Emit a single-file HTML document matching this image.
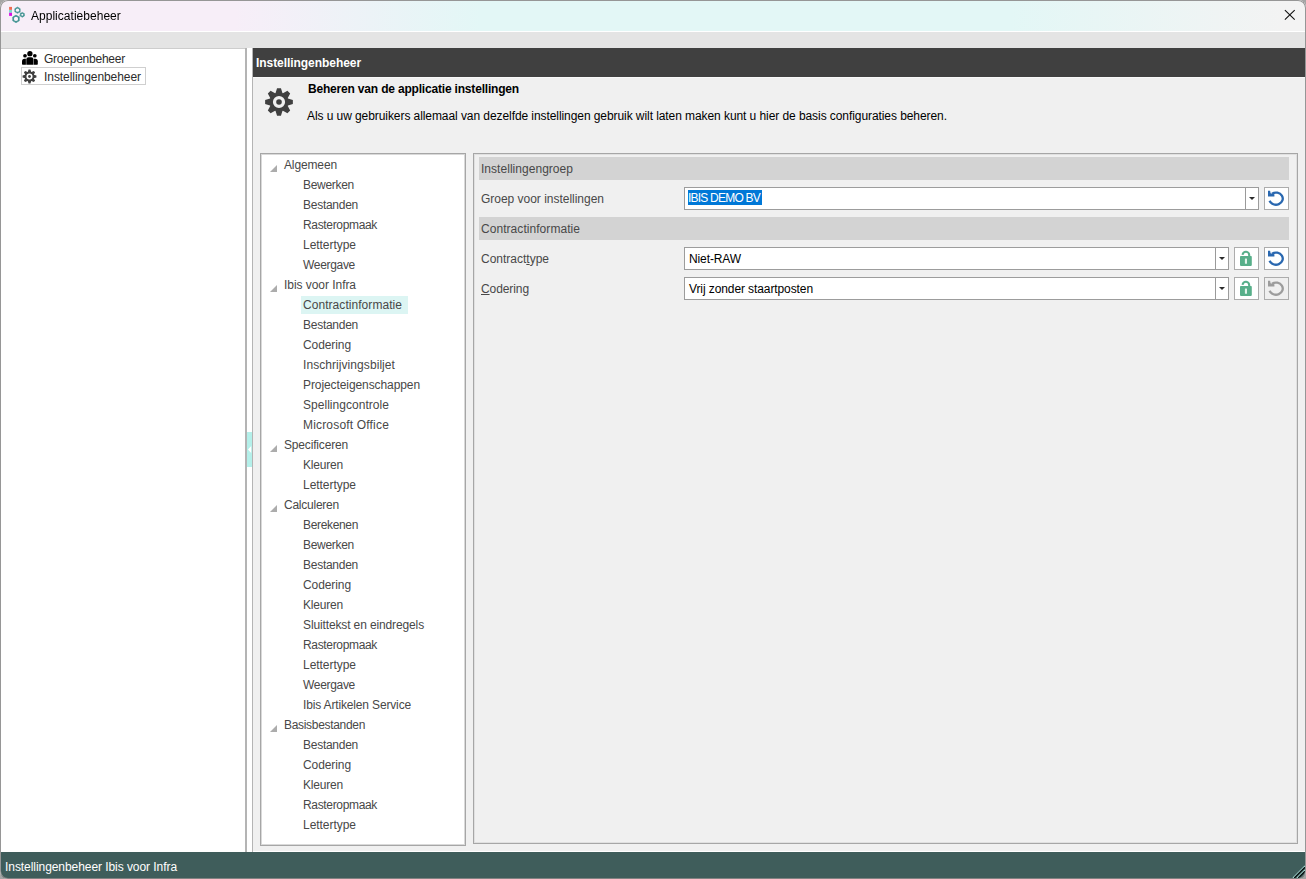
<!DOCTYPE html>
<html lang="nl">
<head>
<meta charset="utf-8">
<title>Applicatiebeheer</title>
<style>
html,body{margin:0;padding:0;}
body{width:1306px;height:879px;overflow:hidden;background:#a5a5a5;font-family:"Liberation Sans",sans-serif;font-size:12px;line-height:14px;color:#1e1e1e;position:relative;}
div,span.tx,svg{position:absolute;box-sizing:border-box;}
.tx{white-space:nowrap;}
#win{left:0;top:0;width:1306px;height:879px;background:#f0f0f0;border-radius:8px;overflow:hidden;}
#frame{left:0;top:0;width:1306px;height:879px;border:1px solid #969696;border-bottom-color:#828282;border-radius:8px;}
#titlebar{left:0;top:0;width:1306px;height:31px;background:linear-gradient(90deg,#f7eef8 0px,#f7eef8 235px,#e3f7f6 480px,#e3f7f6 1010px,#f3f3f3 1285px,#f3f3f3 1306px);}
#tbline{left:0;top:31px;width:1306px;height:1px;background:#fff;}
#band{left:0;top:32px;width:1306px;height:16px;background:#e4e4e4;}
#bandline{left:1px;top:48px;width:245px;height:1px;background:#cdcdcd;}
#left{left:1px;top:49px;width:245px;height:803px;background:#fff;}
#sp1{left:245px;top:48px;width:2px;height:804px;background:#b4b4b4;}
#sp{left:247px;top:48px;width:5px;height:804px;background:#fff;}
#sp2{left:252px;top:48px;width:1px;height:804px;background:#b4b4b4;}
#sph{left:247px;top:432px;width:5px;height:35px;background:#b4f0ea;}
#hdr{left:253px;top:48px;width:1052px;height:29px;background:#404040;}
#hdrline{left:253px;top:77px;width:1052px;height:1px;background:#f8f8f8;}
#wline{left:253px;top:851px;width:1052px;height:1px;background:#fff;}
#status{left:1px;top:852px;width:1304px;height:26px;background:#3f5d5b;}
.nav{color:#2c2c2c;}
#navsel{left:21px;top:67px;width:125px;height:18px;border:1px solid #cfcfcf;}
#treebox{left:260px;top:153px;width:206px;height:693px;background:#fff;border:1px solid #a6a6a6;box-shadow:inset 0 0 0 1px #d9d9d9;}
#setbox{left:473px;top:153px;width:825px;height:691px;border:1px solid #a6a6a6;box-shadow:inset 0 0 0 1px #e0e0e0;}
.tn{color:#484848;}
.tri{left:270px;width:0;height:0;border-left:7px solid transparent;border-bottom:7px solid #acacac;}
.tsel{left:301px;width:107px;height:18px;background:#dcf5f3;}
.sec{left:479px;width:810px;height:23px;background:#d3d3d3;}
.sec .tx{left:2px;top:5px;color:#484848;}
.lbl{color:#484848;}
.combo{height:23px;background:#fff;border:1px solid #9c9c9c;}
.combo .dd{right:0;top:0;width:13px;height:21px;border-left:1px solid #9a9a9a;}
.combo .arr{right:3px;top:9px;width:0;height:0;border-left:3px solid transparent;border-right:3px solid transparent;border-top:3px solid #2a2a2a;}
.combo .val{color:#000;}
.btn{width:25px;height:23px;background:#fff;border:1px solid #acacac;}
.btn.dis{background:#efefef;}
u{text-decoration:underline;text-underline-offset:1px;}
</style>
</head>
<body>
<div id="win">
  <div id="titlebar">
    <svg style="left:0;top:0" width="40" height="31" viewBox="0 0 40 31">
      <rect x="9.1" y="6.9" width="2.9" height="3" fill="#ee6a50"/><rect x="9.1" y="9.9" width="2.9" height="2.9" fill="#7fd8cc"/><rect x="9.1" y="12.8" width="2.9" height="3.1" fill="#d810e2"/>
      <path d="M19.5 12.200 L21 13.500 M19 16.200 L20.600 15.600" stroke="#6fb0ae" stroke-width="0.8" fill="none"/>
      <g fill="#429492" stroke="#429492" stroke-width="0.6" stroke-linejoin="round">
      <polygon points="17.50,7.10 20.18,8.65 20.18,11.75 17.50,13.30 14.82,11.75 14.82,8.65"/>
      <polygon points="22.30,12.40 24.38,13.60 24.38,16.00 22.30,17.20 20.22,16.00 20.22,13.60"/>
      <polygon points="16.00,15.10 19.29,17.00 19.29,20.80 16.00,22.70 12.71,20.80 12.71,17.00"/>
      </g>
      <g fill="#fbf4fb"><circle cx="17.5" cy="10.2" r="1.65"/><circle cx="22.3" cy="14.8" r="1"/><circle cx="16" cy="18.9" r="2.1"/></g>
    </svg>
    <span id="t35" class="tx " style="left:30.5px;top:9px;color:#000;will-change:transform;letter-spacing:0.025px">Applicatiebeheer</span>
    <svg style="left:1284px;top:9px" width="12" height="12" viewBox="0 0 12 12"><path d="M0.900 1.100 L10.700 10.700 M10.700 1.100 L0.900 10.700" stroke="#111" stroke-width="1.1" fill="none"/></svg>
  </div>
  <div id="tbline"></div>
  <div id="band"></div>
  <div id="left"></div>
  <div id="bandline"></div>
  <div id="sp1"></div><div id="sp"></div><div id="sp2"></div>
  <div id="sph"><svg style="left:0;top:13px" width="5" height="9" viewBox="0 0 5 9"><path d="M4.2 1 L1 4.500 L4.2 8 Z" fill="#fff"/></svg></div>

  <!-- left navigation -->
  <svg style="left:22px;top:51px" width="17" height="15" viewBox="0 0 17 15">
    <g fill="#000"><circle cx="7.9" cy="2.65" r="2.65"/><circle cx="3" cy="4.750" r="1.85"/><circle cx="12.800" cy="4.750" r="1.85"/>
    <path d="M4.300 13.750 V8.500 Q4.300 6.300 6.500 6.300 H9.300 Q11.500 6.300 11.500 8.500 V13.750 Z"/>
    <path d="M0 13 V10.250 Q0 7.750 2.500 7.750 H3.900 V13.750 H0.750 Q0 13.750 0 13 Z"/>
    <path d="M15.800 13 V10.250 Q15.800 7.750 13.300 7.750 H11.900 V13.750 H15.050 Q15.800 13.750 15.800 13 Z"/></g>
  </svg>
  <span id="t36" class="tx nav" style="left:44px;top:52px;letter-spacing:-0.237px">Groepenbeheer</span>
  <div id="navsel"></div>
  <svg style="left:22.4px;top:68.6px" width="15" height="15" viewBox="-15 -15 30 30"><path fill="#404040" fill-rule="evenodd" d="M-3.44 -8.96L-1.95 -13.86L1.95 -13.86L3.44 -8.96A9.6 9.6 0 0 1 3.90 -8.77L8.43 -11.18L11.18 -8.43L8.77 -3.90A9.6 9.6 0 0 1 8.96 -3.44L13.86 -1.95L13.86 1.95L8.96 3.44A9.6 9.6 0 0 1 8.77 3.90L11.18 8.43L8.43 11.18L3.90 8.77A9.6 9.6 0 0 1 3.44 8.96L1.95 13.86L-1.95 13.86L-3.44 8.96A9.6 9.6 0 0 1 -3.90 8.77L-8.43 11.18L-11.18 8.43L-8.77 3.90A9.6 9.6 0 0 1 -8.96 3.44L-13.86 1.95L-13.86 -1.95L-8.96 -3.44A9.6 9.6 0 0 1 -8.77 -3.90L-11.18 -8.43L-8.43 -11.18L-3.90 -8.77A9.6 9.6 0 0 1 -3.44 -8.96ZM0 -6.1A6.1 6.1 0 1 0 0 6.1A6.1 6.1 0 1 0 0 -6.1Z"/><circle cx="0" cy="0" r="2.8" fill="#404040"/></svg>
  <span id="t37" class="tx nav" style="left:44px;top:70px;letter-spacing:-0.060px">Instellingenbeheer</span>

  <!-- right panel -->
  <div id="hdr"></div>
  <span id="t38" class="tx " style="left:256px;top:56px;color:#fff;font-weight:bold;letter-spacing:-0.057px">Instellingenbeheer</span>
  <div id="hdrline"></div>
  <svg style="left:264px;top:87px" width="30" height="30" viewBox="-15 -15 30 30"><path fill="#404040" fill-rule="evenodd" d="M-3.44 -8.96L-1.95 -13.86L1.95 -13.86L3.44 -8.96A9.6 9.6 0 0 1 3.90 -8.77L8.43 -11.18L11.18 -8.43L8.77 -3.90A9.6 9.6 0 0 1 8.96 -3.44L13.86 -1.95L13.86 1.95L8.96 3.44A9.6 9.6 0 0 1 8.77 3.90L11.18 8.43L8.43 11.18L3.90 8.77A9.6 9.6 0 0 1 3.44 8.96L1.95 13.86L-1.95 13.86L-3.44 8.96A9.6 9.6 0 0 1 -3.90 8.77L-8.43 11.18L-11.18 8.43L-8.77 3.90A9.6 9.6 0 0 1 -8.96 3.44L-13.86 1.95L-13.86 -1.95L-8.96 -3.44A9.6 9.6 0 0 1 -8.77 -3.90L-11.18 -8.43L-8.43 -11.18L-3.90 -8.77A9.6 9.6 0 0 1 -3.44 -8.96ZM0 -6.1A6.1 6.1 0 1 0 0 6.1A6.1 6.1 0 1 0 0 -6.1Z"/><circle cx="0" cy="0" r="2.8" fill="#404040"/></svg>
  <span id="t39" class="tx " style="left:308px;top:82px;font-weight:bold;color:#000;letter-spacing:-0.186px">Beheren van de applicatie instellingen</span>
  <span id="t40" class="tx " style="left:307px;top:109px;color:#000;letter-spacing:-0.074px">Als u uw gebruikers allemaal van dezelfde instellingen gebruik wilt laten maken kunt u hier de basis configuraties beheren.</span>

  <div id="treebox"></div>
<div class="tri" style="top:165px"></div><span id="t1" class="tx tn" style="left:284px;top:158px;letter-spacing:-0.131px">Algemeen</span>
<span id="t2" class="tx tn" style="left:303px;top:178px;letter-spacing:-0.297px">Bewerken</span>
<span id="t3" class="tx tn" style="left:303px;top:198px;letter-spacing:-0.266px">Bestanden</span>
<span id="t4" class="tx tn" style="left:303px;top:218px;letter-spacing:-0.337px">Rasteropmaak</span>
<span id="t5" class="tx tn" style="left:303px;top:238px;letter-spacing:-0.037px">Lettertype</span>
<span id="t6" class="tx tn" style="left:303px;top:258px;letter-spacing:-0.311px">Weergave</span>
<div class="tri" style="top:285px"></div><span id="t7" class="tx tn" style="left:284px;top:278px;letter-spacing:-0.047px">Ibis voor Infra</span>
<div class="tsel" style="top:296px"></div><span id="t8" class="tx tn" style="left:303px;top:298px;letter-spacing:0.053px">Contractinformatie</span>
<span id="t9" class="tx tn" style="left:303px;top:318px;letter-spacing:-0.266px">Bestanden</span>
<span id="t10" class="tx tn" style="left:303px;top:338px;letter-spacing:-0.088px">Codering</span>
<span id="t11" class="tx tn" style="left:303px;top:358px;letter-spacing:0.068px">Inschrijvingsbiljet</span>
<span id="t12" class="tx tn" style="left:303px;top:378px;letter-spacing:-0.088px">Projecteigenschappen</span>
<span id="t13" class="tx tn" style="left:303px;top:398px;letter-spacing:0.038px">Spellingcontrole</span>
<span id="t14" class="tx tn" style="left:303px;top:418px;letter-spacing:0.179px">Microsoft Office</span>
<div class="tri" style="top:445px"></div><span id="t15" class="tx tn" style="left:284px;top:438px;letter-spacing:-0.171px">Specificeren</span>
<span id="t16" class="tx tn" style="left:303px;top:458px;letter-spacing:-0.196px">Kleuren</span>
<span id="t17" class="tx tn" style="left:303px;top:478px;letter-spacing:-0.037px">Lettertype</span>
<div class="tri" style="top:505px"></div><span id="t18" class="tx tn" style="left:284px;top:498px;letter-spacing:-0.237px">Calculeren</span>
<span id="t19" class="tx tn" style="left:303px;top:518px;letter-spacing:-0.339px">Berekenen</span>
<span id="t20" class="tx tn" style="left:303px;top:538px;letter-spacing:-0.297px">Bewerken</span>
<span id="t21" class="tx tn" style="left:303px;top:558px;letter-spacing:-0.266px">Bestanden</span>
<span id="t22" class="tx tn" style="left:303px;top:578px;letter-spacing:-0.088px">Codering</span>
<span id="t23" class="tx tn" style="left:303px;top:598px;letter-spacing:-0.196px">Kleuren</span>
<span id="t24" class="tx tn" style="left:303px;top:618px;letter-spacing:-0.128px">Sluittekst en eindregels</span>
<span id="t25" class="tx tn" style="left:303px;top:638px;letter-spacing:-0.337px">Rasteropmaak</span>
<span id="t26" class="tx tn" style="left:303px;top:658px;letter-spacing:-0.037px">Lettertype</span>
<span id="t27" class="tx tn" style="left:303px;top:678px;letter-spacing:-0.311px">Weergave</span>
<span id="t28" class="tx tn" style="left:303px;top:698px;letter-spacing:-0.154px">Ibis Artikelen Service</span>
<div class="tri" style="top:725px"></div><span id="t29" class="tx tn" style="left:284px;top:718px;letter-spacing:-0.315px">Basisbestanden</span>
<span id="t30" class="tx tn" style="left:303px;top:738px;letter-spacing:-0.266px">Bestanden</span>
<span id="t31" class="tx tn" style="left:303px;top:758px;letter-spacing:-0.088px">Codering</span>
<span id="t32" class="tx tn" style="left:303px;top:778px;letter-spacing:-0.196px">Kleuren</span>
<span id="t33" class="tx tn" style="left:303px;top:798px;letter-spacing:-0.337px">Rasteropmaak</span>
<span id="t34" class="tx tn" style="left:303px;top:818px;letter-spacing:-0.037px">Lettertype</span>

  <div id="setbox"></div>
  <div class="sec" style="top:157px"><span id="t41" class="tx " style=";letter-spacing:0.035px">Instellingengroep</span></div>
  <span id="t42" class="tx lbl" style="left:481px;top:192px;letter-spacing:-0.018px">Groep voor instellingen</span>
  <div class="combo" style="left:684px;top:187px;width:575px"><div style="left:3px;top:2px;width:74px;height:15px;background:#0078d7"></div><span id="t43" class="tx val" style="left:3px;top:3px;color:#fff;letter-spacing:-0.780px">IBIS DEMO BV</span><div class="dd"></div><div class="arr"></div></div>
  <div class="btn" style="left:1264px;top:187px"><svg style="left:0;top:0" width="23" height="21" viewBox="1265 188 23 21"><path d="M1272.05 193.65 A6.8 6.1 0 1 1 1269.56 200.74" fill="none" stroke="#2a68b0" stroke-width="2.3"/><path d="M1268 190.800 H1270.100 L1270.600 193.300 L1274.400 194.200 V196.600 H1268 Z" fill="#2a68b0"/></svg></div>

  <div class="sec" style="top:217px"><span id="t44" class="tx " style=";letter-spacing:0.053px">Contractinformatie</span></div>
  <span id="t45" class="tx lbl" style="left:481px;top:252px;letter-spacing:-0.005px">Contract<u>t</u>ype</span>
  <div class="combo" style="left:684px;top:247px;width:545px"><span id="t46" class="tx val" style="left:4px;top:4px;letter-spacing:-0.111px">Niet-RAW</span><div class="dd"></div><div class="arr"></div></div>
  <div class="btn" style="left:1234px;top:247px"><svg style="left:0;top:0" width="23" height="21" viewBox="1235 248 23 21"><rect x="1240" y="256.1" width="11.8" height="9.8" rx="0.8" fill="#58af8a"/><path d="M1242.600 254.800 A3.300 3.300 0 0 1 1249.200 255.300 V257" fill="none" stroke="#58af8a" stroke-width="2.1"/><rect x="1244.900" y="258.400" width="2.100" height="5.400" rx="0.6" fill="#e1f2ea"/></svg></div>
  <div class="btn" style="left:1264px;top:247px"><svg style="left:0;top:0" width="23" height="21" viewBox="1265 188 23 21"><path d="M1272.05 193.65 A6.8 6.1 0 1 1 1269.56 200.74" fill="none" stroke="#2a68b0" stroke-width="2.3"/><path d="M1268 190.800 H1270.100 L1270.600 193.300 L1274.400 194.200 V196.600 H1268 Z" fill="#2a68b0"/></svg></div>

  <span id="t47" class="tx lbl" style="left:481px;top:282px;letter-spacing:-0.088px"><u>C</u>odering</span>
  <div class="combo" style="left:684px;top:277px;width:545px"><span id="t48" class="tx val" style="left:4px;top:4px;letter-spacing:-0.096px">Vrij zonder staartposten</span><div class="dd"></div><div class="arr"></div></div>
  <div class="btn" style="left:1234px;top:277px"><svg style="left:0;top:0" width="23" height="21" viewBox="1235 248 23 21"><rect x="1240" y="256.1" width="11.8" height="9.8" rx="0.8" fill="#58af8a"/><path d="M1242.600 254.800 A3.300 3.300 0 0 1 1249.200 255.300 V257" fill="none" stroke="#58af8a" stroke-width="2.1"/><rect x="1244.900" y="258.400" width="2.100" height="5.400" rx="0.6" fill="#e1f2ea"/></svg></div>
  <div class="btn dis" style="left:1264px;top:277px"><svg style="left:0;top:0" width="23" height="21" viewBox="1265 188 23 21"><path d="M1272.05 193.65 A6.8 6.1 0 1 1 1269.56 200.74" fill="none" stroke="#9c9c9c" stroke-width="2.3"/><path d="M1268 190.800 H1270.100 L1270.600 193.300 L1274.400 194.200 V196.600 H1268 Z" fill="#9c9c9c"/></svg></div>

  <div id="wline"></div>
  <div id="status">
    <svg style="left:1290px;top:12px" width="14" height="14" viewBox="0 0 14 14"><path d="M2 14 L14 2 M6 14 L14 6" stroke="#a8dcd6" stroke-width="1.2"/><path d="M3.200 14 L14 3.200 M7.200 14 L14 7.200" stroke="#0a1414" stroke-width="1.400"/></svg>
  </div>
  <span id="t49" class="tx " style="left:5px;top:860px;color:#fff;letter-spacing:-0.062px">Instellingenbeheer Ibis voor Infra</span>
</div>
<div id="frame"></div>
</body>
</html>
